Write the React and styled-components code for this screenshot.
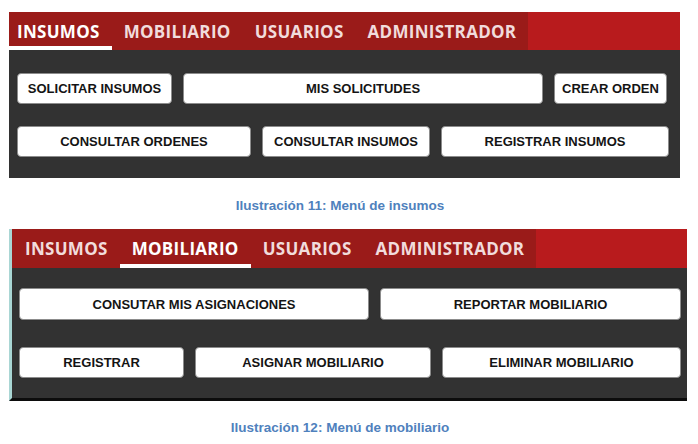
import React from "react";
import styled, { createGlobalStyle } from "styled-components";

const GlobalStyle = createGlobalStyle`
  body {
    margin: 0;
    background: #ffffff;
    font-family: "Liberation Sans", Arial, sans-serif;
  }
`;

const menus = [
  {
    id: 11,
    active: "INSUMOS",
    title: "Menú de insumos",
    rows: [
      {
        cols: "155px 360px 113px",
        items: ["SOLICITAR INSUMOS", "MIS SOLICITUDES", "CREAR ORDEN"],
      },
      {
        cols: "234px 168px 228px",
        items: ["CONSULTAR ORDENES", "CONSULTAR INSUMOS", "REGISTRAR INSUMOS"],
      },
    ],
  },
  {
    id: 12,
    active: "MOBILIARIO",
    title: "Menú de mobiliario",
    rows: [
      {
        cols: "350px 301px",
        items: ["CONSUTAR MIS ASIGNACIONES", "REPORTAR MOBILIARIO"],
      },
      {
        cols: "165px 236px 239px",
        items: ["REGISTRAR", "ASIGNAR MOBILIARIO", "ELIMINAR MOBILIARIO"],
      },
    ],
  },
];

const tabs = ["INSUMOS", "MOBILIARIO", "USUARIOS", "ADMINISTRADOR"];

const App = () => {
  return (
    <Page>
      <GlobalStyle />
      {menus.map((menu, i) => (
        <Figure key={menu.id} $second={i === 1}>
          <Panel $second={i === 1}>
            <TabBar $second={i === 1}>
              <TabGroup $lead={i === 0 ? 8 : 13}>
                {tabs.map((t) => (
                  <Tab key={t} $active={t === menu.active}>
                    {t}
                  </Tab>
                ))}
              </TabGroup>
            </TabBar>
            <Body $second={i === 1}>
              {menu.rows.map((row, r) => (
                <ButtonRow key={r} $cols={row.cols} $tall={i === 1 && r === 0}>
                  {row.items.map((label) => (
                    <MenuButton key={label}>{label}</MenuButton>
                  ))}
                </ButtonRow>
              ))}
            </Body>
          </Panel>
          <Caption $second={i === 1}>
            Ilustración {menu.id}: {menu.title}
          </Caption>
        </Figure>
      ))}
    </Page>
  );
};

const Page = styled.div`
  width: 698px;
  height: 444px;
  padding-top: 12px;
  box-sizing: border-box;
  overflow: hidden;
`;

const Figure = styled.section`
  display: flex;
  flex-direction: column;
  margin-top: ${(p) => (p.$second ? "15px" : "0")};
`;

const Panel = styled.div`
  margin-left: 9px;
  width: ${(p) => (p.$second ? "678px" : "671px")};
  box-sizing: border-box;
  border-left: ${(p) => (p.$second ? "3px solid #a9d6d4" : "none")};
  border-bottom: ${(p) => (p.$second ? "3px solid #0c0c0c" : "none")};
  background: #323232;
`;

const TabBar = styled.nav`
  display: flex;
  height: ${(p) => (p.$second ? "39px" : "38px")};
  background: #b81b1d;
`;

const TabGroup = styled.div`
  display: flex;
  align-items: stretch;
  background: #9a1b19;

  & > :first-child {
    padding-left: ${(p) => p.$lead}px;
  }
`;

const Tab = styled.div`
  display: flex;
  align-items: center;
  padding: 0 12px;
  font-family: "Open Sans", "DejaVu Sans", sans-serif;
  font-weight: 700;
  font-size: 17px;
  letter-spacing: 0.3px;
  color: ${(p) => (p.$active ? "#ffffff" : "#f1dcdc")};
  box-shadow: ${(p) => (p.$active ? "inset 0 -4px 0 #ffffff" : "none")};
`;

const Body = styled.div`
  display: flex;
  flex-direction: column;
  gap: ${(p) => (p.$second ? "27px" : "22px")};
  padding: ${(p) => (p.$second ? "20px 0 20px 7px" : "23px 0 21px 8px")};
`;

const ButtonRow = styled.div`
  display: grid;
  grid-template-columns: ${(p) => p.$cols};
  column-gap: 11px;
  height: ${(p) => (p.$tall ? "32px" : "31px")};
`;

const MenuButton = styled.button`
  display: flex;
  align-items: center;
  justify-content: center;
  margin: 0;
  padding: 0;
  background: #ffffff;
  border: 1px solid #8c8c8c;
  border-radius: 4px;
  box-shadow: 0 0 1px rgba(0, 0, 0, 0.4);
  font-family: "Liberation Sans", Arial, sans-serif;
  font-weight: 700;
  font-size: 13px;
  letter-spacing: 0;
  color: #141414;
`;

const Caption = styled.p`
  margin: ${(p) => (p.$second ? "19px 0 0" : "20px 0 0")};
  padding-right: 18px;
  text-align: center;
  line-height: 16px;
  font-family: "Liberation Sans", Arial, sans-serif;
  font-weight: 700;
  font-size: 13.5px;
  color: #4f81bd;
`;

export default App;
